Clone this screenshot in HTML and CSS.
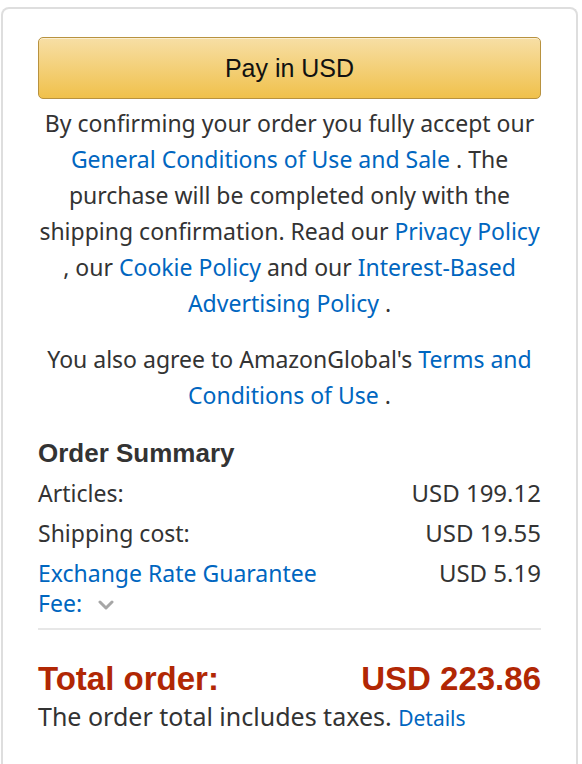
FILE: index.html
```
<html>

<head>
	<meta charset="utf-8">
	<link rel="stylesheet" href="styles.css">
</head>

<body>
	<div class="checkoutBox">
		<button type="button" class="payButton">Pay in USD</button>
		<p class="legal">By confirming your order you fully accept our <a href="#">General Conditions of Use and Sale</a> . The purchase will be completed only with the shipping confirmation. Read our <a href="#">Privacy Policy</a> , our <a href="#">Cookie Policy</a> and our <a href="#">Interest-Based Advertising Policy</a> .</p>
		<p class="legal">You also agree to AmazonGlobal's <a href="#">Terms and Conditions of Use</a> .</p>

		<h3 class="summaryTitle">Order Summary</h3>
		<div class="summaryRow">
			<span class="rowLabel">Articles:</span>
			<span class="rowValue">USD 199.12</span>
		</div>
		<div class="summaryRow">
			<span class="rowLabel">Shipping cost:</span>
			<span class="rowValue">USD 19.55</span>
		</div>
		<div class="summaryRow">
			<span class="rowLabel"><a href="#">Exchange Rate Guarantee Fee:</a>
				<svg class="chevron" width="16" height="10" viewBox="0 0 16 10"><path d="M2 2 L8 8 L14 2" fill="none" stroke="#a6a6a6" stroke-width="3" stroke-linecap="round" stroke-linejoin="round"/></svg>
			</span>
			<span class="rowValue">USD 5.19</span>
		</div>
		<div class="divider"></div>
		<div class="totalRow">
			<span>Total order:</span>
			<span>USD 223.86</span>
		</div>
		<p class="taxNote">The order total includes taxes. <a href="#">Details</a></p>
	</div>
</body>

</html>
```
FILE: styles.css
```
body {
	margin: 0;
	font-family: "Noto Sans", "Open Sans", sans-serif;
	color: #333;
	background: #fff;
}

a {
	color: #0066c0;
	text-decoration: none;
}

.checkoutBox {
	margin: 7px 4px 0 1px;
	padding: 28px 35px 40px 35px;
	border: 2px solid #dedede;
	border-bottom: none;
	border-radius: 8px 8px 0 0;
	min-height: 760px;
	box-sizing: border-box;
}

.payButton {
	display: block;
	width: 100%;
	height: 62px;
	padding: 0;
	border: 1px solid #b8923f;
	border-radius: 5px;
	background: linear-gradient(to bottom, #f7dfa5, #f0c14b);
	box-shadow: inset 0 1px 0 rgba(255, 255, 255, 0.5);
	font-family: "Liberation Sans", Arial, sans-serif;
	font-size: 25px;
	color: #111;
}

.legal {
	margin: 6px 0 20px 0;
	font-size: 23px;
	line-height: 36px;
	text-align: center;
}

.summaryTitle {
	margin: 22px 0 7px 0;
	font-family: "Liberation Sans", Arial, sans-serif;
	font-size: 26px;
	line-height: 36px;
	font-weight: bold;
}

.summaryRow {
	display: flex;
	justify-content: space-between;
	font-size: 23px;
	line-height: 30px;
	margin-bottom: 10px;
}

.summaryRow .rowLabel {
	width: 60%;
}

.summaryRow .rowValue {
	font-size: 24px;
}

.chevron {
	margin-left: 10px;
	vertical-align: 2px;
}

.divider {
	height: 2px;
	background: #e7e7e7;
	margin: 5px 0 29px 0;
}

.totalRow {
	display: flex;
	justify-content: space-between;
	font-family: "Liberation Sans", Arial, sans-serif;
	font-size: 33px;
	line-height: 40px;
	font-weight: bold;
	color: #b12704;
}

.taxNote {
	margin: 0;
	font-size: 25px;
	line-height: 34px;
}

.taxNote a {
	font-size: 21px;
}
```
